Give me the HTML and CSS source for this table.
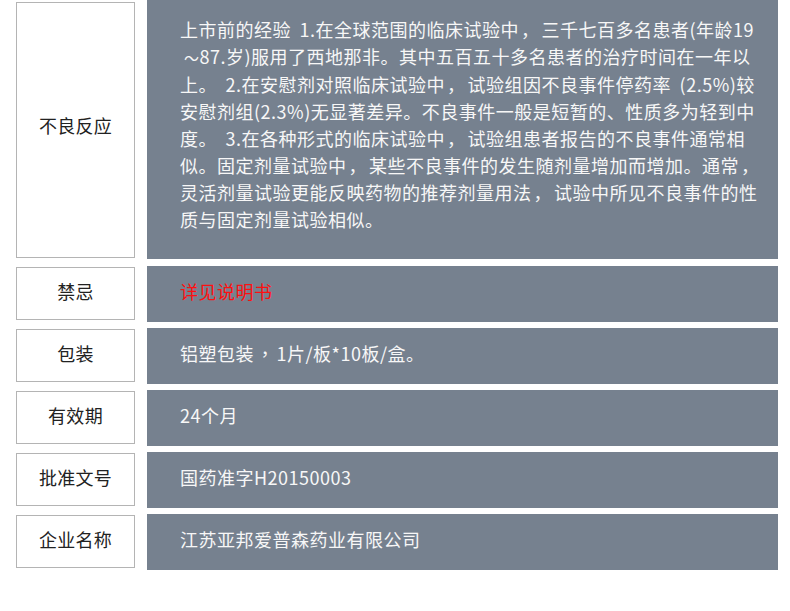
FILE: index.html
```html
<!DOCTYPE html>
<html lang="zh-CN">
<head>
    <meta charset="UTF-8">
    <meta name="viewport" content="width=device-width, initial-scale=1.0">
    <title>药品说明</title>
    <link rel="stylesheet" href="styles.css">
</head>
<body>

<!-- 说明书信息 -->
<div class="spec-list">
    <div class="spec-row spec-row-tall">
        <div class="spec-label">不良反应</div>
        <div class="spec-value">
            上市前的经验 1.在全球范围的临床试验中<span class="comma">，</span>三千七百多名患者(年龄19<br>
            <span class="tilde">～</span>87.岁)服用了西地那非。其中五百五十多名患者的治疗时间在一年以<br>
            上。 2.在安慰剂对照临床试验中<span class="comma">，</span>试验组因不良事件停药率 (2.5%)较<br>
            安慰剂组(2.3%)无显著差异。不良事件一般是短暂的、性质多为轻到中<br>
            度。 3.在各种形式的临床试验中<span class="comma">，</span>试验组患者报告的不良事件通常相<br>
            似。固定剂量试验中<span class="comma">，</span>某些不良事件的发生随剂量增加而增加。通常<span class="comma">，</span><br>
            灵活剂量试验更能反映药物的推荐剂量用法<span class="comma">，</span>试验中所见不良事件的性<br>
            质与固定剂量试验相似。
        </div>
    </div>
    <div class="spec-row">
        <div class="spec-label">禁忌</div>
        <div class="spec-value"><span class="text-red">详见说明书</span></div>
    </div>
    <div class="spec-row">
        <div class="spec-label">包装</div>
        <div class="spec-value">铝塑包装<span class="comma">，</span>1片/板*10板/盒。</div>
    </div>
    <div class="spec-row">
        <div class="spec-label">有效期</div>
        <div class="spec-value">24个月</div>
    </div>
    <div class="spec-row">
        <div class="spec-label">批准文号</div>
        <div class="spec-value">国药准字H20150003</div>
    </div>
    <div class="spec-row">
        <div class="spec-label">企业名称</div>
        <div class="spec-value">江苏亚邦爱普森药业有限公司</div>
    </div>
</div>

</body>
</html>
```

FILE: styles.css
```css
body {
    margin: 0;
    background: #fff;
    font-family: "Noto Sans CJK SC", "Noto Sans", sans-serif;
    font-size: 18px;
}
.spec-list {
    display: flex;
    flex-direction: column;
    gap: 6px;
    width: 778px;
}
.spec-row {
    display: flex;
    height: 56px;
}
.spec-row-tall {
    height: 259px;
    margin-bottom: 1px;
}
.spec-label {
    box-sizing: border-box;
    width: 119px;
    margin: 1px 12px 2px 16px;
    padding-bottom: 6px;
    border: 1px solid #b4b4b4;
    display: flex;
    align-items: center;
    justify-content: center;
    color: #222;
    letter-spacing: 0.3px;
}
.spec-row-tall .spec-label {
    margin: 2px 12px 1px 16px;
    padding-bottom: 10px;
}
.spec-value {
    flex: 1;
    display: flex;
    align-items: center;
    padding: 0 13px 6px 33px;
    background-color: #76818f;
    color: #f7f7f7;
    line-height: 27px;
    letter-spacing: 0.5px;
    word-spacing: 4px;
}
.spec-row-tall .spec-value {
    display: block;
    padding: 16px 10px 27px 33px;
    white-space: nowrap;
}
.comma {
    font-family: "Noto Sans CJK TC", sans-serif;
    margin: 0 2px;
}
.tilde {
    font-size: 15px;
    margin-left: 4px;
}
.text-red { color: #ff1010; }
```
